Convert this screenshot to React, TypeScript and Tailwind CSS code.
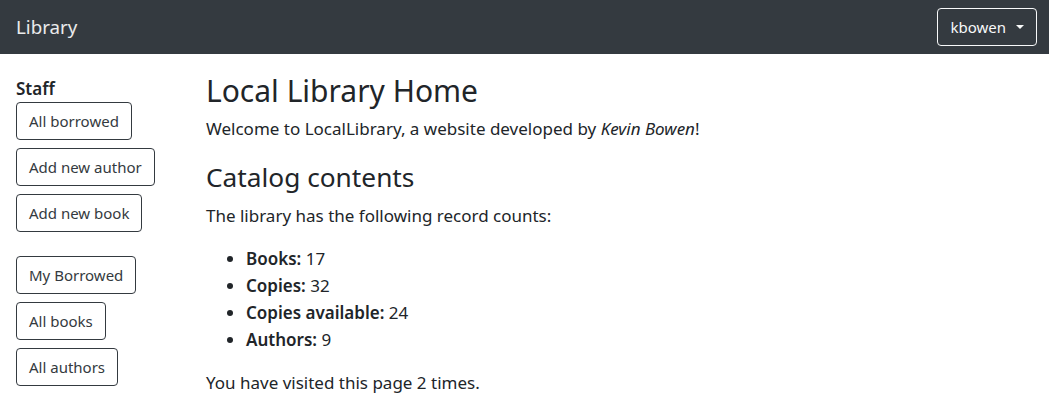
import React from 'react';

const staffLinks = ['All borrowed', 'Add new author', 'Add new book'];
const userLinks = ['My Borrowed', 'All books', 'All authors'];

const counts = [
  { label: 'Books:', value: 17 },
  { label: 'Copies:', value: 32 },
  { label: 'Copies available:', value: 24 },
  { label: 'Authors:', value: 9 },
];

const SideButton: React.FC<{ label: string }> = ({ label }) => (
  <a
    href="#"
    className="inline-block self-start rounded border border-[#343a40] px-3 py-[6px] text-[15px] leading-6 text-[#343a40]"
  >
    {label}
  </a>
);

const App: React.FC = () => {
  return (
    <div className="min-h-screen bg-white text-[17px] text-[#212529] font-['Noto_Sans',sans-serif]">
      {/* Navbar */}
      <nav className="flex h-[54px] items-center justify-between bg-[#343a40] pl-4 pr-3">
        <a href="#" className="text-[18.75px] leading-7 text-white/90">
          Library
        </a>
        <button className="flex h-[38px] items-center rounded border border-[#f8f9fa] px-3 text-[15px] leading-6 text-[#f8f9fa]">
          kbowen
          <span className="ml-[10px] inline-block h-0 w-0 border-x-4 border-t-4 border-x-transparent border-t-[#f8f9fa]" />
        </button>
      </nav>

      <div className="flex">
        {/* Sidebar */}
        <aside className="w-[206px] shrink-0 pl-4 pt-[21px]">
          <div className="font-semibold leading-[27px]">Staff</div>
          <div className="flex flex-col gap-2">
            {staffLinks.map((l) => (
              <SideButton key={l} label={l} />
            ))}
          </div>
          <div className="mt-6 flex flex-col gap-2">
            {userLinks.map((l) => (
              <SideButton key={l} label={l} />
            ))}
          </div>
        </aside>

        {/* Main */}
        <main className="flex-1 pt-[15px] leading-[27px]">
          <h1 className="mb-[2px] text-[30px] leading-[44px] font-normal">Local Library Home</h1>
          <p className="mb-[14px]">
            Welcome to LocalLibrary, a website developed by <em>Kevin Bowen</em>!
          </p>
          <h2 className="mb-1 text-[26.25px] leading-[42px] font-normal">Catalog contents</h2>
          <p className="mb-4">The library has the following record counts:</p>
          <ul className="mb-4 list-disc pl-10">
            {counts.map((c) => (
              <li key={c.label}>
                <strong className="font-semibold">{c.label}</strong> {c.value}
              </li>
            ))}
          </ul>
          <p>You have visited this page 2 times.</p>
        </main>
      </div>
    </div>
  );
};

export default App;
